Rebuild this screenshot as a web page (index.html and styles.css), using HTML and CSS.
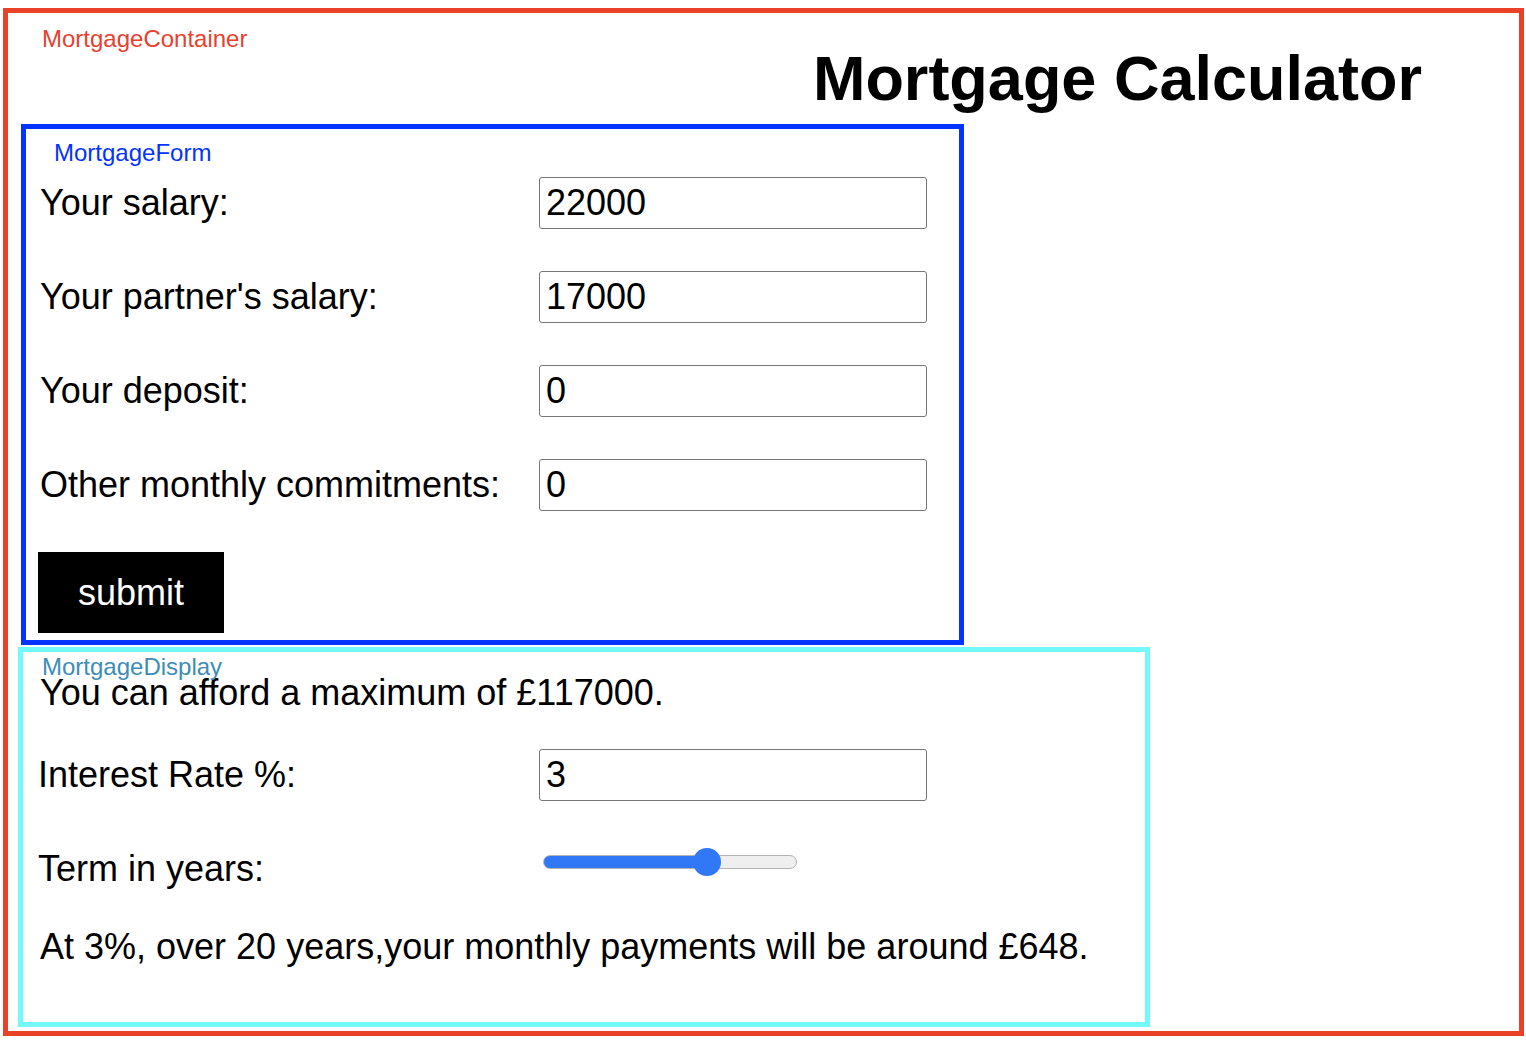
FILE: index.html
```html
<!DOCTYPE html>
<html lang="en">
<head>
<meta charset="utf-8">
<title>Mortgage Calculator</title>
<link rel="stylesheet" href="styles.css">
</head>
<body>
<div class="container">
  <span class="tag tag-container">MortgageContainer</span>
  <header class="header">
    <h1 class="title">Mortgage Calculator</h1>
  </header>
  <form class="form">
    <span class="tag tag-form">MortgageForm</span>
    <div class="fields">
      <label class="label" for="salary">Your salary:</label>
      <input class="field" id="salary" type="text" value="22000">
      <label class="label" for="partner">Your partner's salary:</label>
      <input class="field" id="partner" type="text" value="17000">
      <label class="label" for="deposit">Your deposit:</label>
      <input class="field" id="deposit" type="text" value="0">
      <label class="label" for="other">Other monthly commitments:</label>
      <input class="field" id="other" type="text" value="0">
    </div>
    <button class="submit" type="button">submit</button>
  </form>
  <section class="display">
    <span class="tag tag-display">MortgageDisplay</span>
    <p class="line">You can afford a maximum of £117000.</p>
    <div class="fields fields-display">
      <label class="label label-flush" for="rate">Interest Rate %:</label>
      <input class="field" id="rate" type="text" value="3">
      <label class="label label-flush" for="term">Term in years:</label>
      <input class="range" id="term" type="range" min="0" max="30" value="20" style="--fill: 64.4%">
    </div>
    <p class="line result">At 3%, over 20 years,your monthly payments will be around £648.</p>
  </section>
</div>
</body>
</html>
```
FILE: styles.css
```css
html, body {
  background: #ffffff;
}

body {
  margin: 8px 2px 4px 3px;
  font-family: "Liberation Sans", Arial, Helvetica, sans-serif;
  color: #000000;
}

.container {
  position: relative;
  border: 5px solid #ea4229;
  padding-bottom: 4px;
}

.tag {
  position: absolute;
  font-size: 24px;
  line-height: 28px;
  white-space: nowrap;
}

.tag-container {
  left: 34px;
  top: 12px;
  color: #e8412f;
}

.tag-form {
  left: 28px;
  top: 10px;
  color: #0433ff;
}

.tag-display {
  left: 19px;
  top: 1px;
  color: #3d8db6;
}

.header {
  display: flex;
  justify-content: flex-end;
  padding-top: 33px;
  padding-right: 97px;
}

.title {
  margin: 0;
  font-size: 63px;
  line-height: 64px;
  font-weight: 700;
}

.form {
  position: relative;
  width: 933px;
  margin: 14px 0 0 13px;
  border: 5px solid #0433ff;
  padding: 48px 0 7px 12px;
  box-sizing: content-box;
  width: 921px;
}

.fields {
  display: grid;
  grid-template-columns: 501px 388px;
  grid-auto-rows: 52px;
  row-gap: 42px;
  align-items: center;
}

.label {
  font-size: 36px;
  line-height: 42px;
  padding-left: 2px;
  white-space: nowrap;
}

.label-flush {
  padding-left: 0;
}

.field {
  box-sizing: border-box;
  width: 388px;
  height: 52px;
  margin: 0;
  border: 1px solid #767676;
  border-radius: 3px;
  padding: 0 6px;
  font-family: "Liberation Sans", Arial, Helvetica, sans-serif;
  font-size: 36px;
  color: #000000;
  background: #ffffff;
}

.submit {
  display: flex;
  align-items: center;
  justify-content: center;
  width: 186px;
  height: 81px;
  margin-top: 41px;
  padding: 0;
  border: none;
  background: #000000;
  color: #ffffff;
  font-family: "Liberation Sans", Arial, Helvetica, sans-serif;
  font-size: 36px;
}

.display {
  position: relative;
  width: 1107px;
  margin: 2px 0 0 10px;
  border: 5px solid #72f8fd;
  padding: 20px 0 54px 15px;
}

.line {
  margin: 0;
  padding-left: 2px;
  font-size: 36px;
  line-height: 42px;
  white-space: nowrap;
}

.fields-display {
  margin-top: 35px;
}

.result {
  margin-top: 31px;
}

.range {
  -webkit-appearance: none;
  appearance: none;
  align-self: start;
  width: 254px;
  height: 28px;
  margin: 5px 0 0 4px;
  padding: 0;
  background: transparent;
}

.range::-webkit-slider-runnable-track {
  box-sizing: border-box;
  height: 14px;
  border-radius: 7px;
  border: 1px solid #b3b3b3;
  background: linear-gradient(to right, #3078f6 0, #3078f6 var(--fill), #efefef var(--fill), #efefef 100%);
}

.range::-webkit-slider-thumb {
  -webkit-appearance: none;
  appearance: none;
  width: 28px;
  height: 28px;
  margin-top: -8px;
  border: none;
  border-radius: 50%;
  background: #3078f6;
}
```
